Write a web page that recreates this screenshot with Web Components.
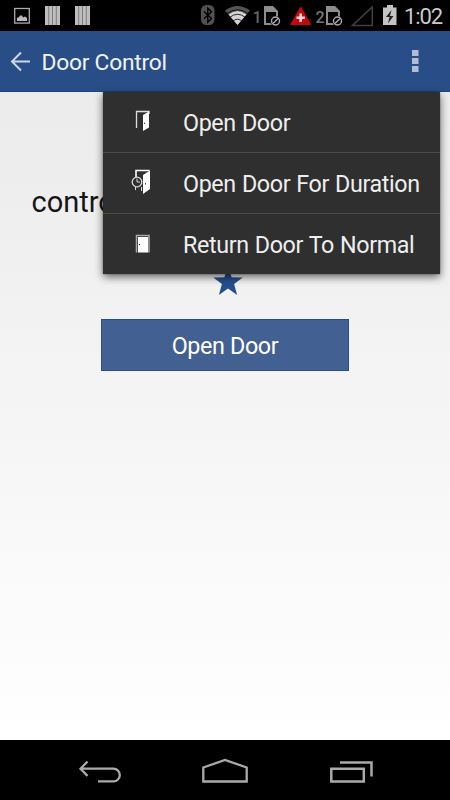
<!DOCTYPE html>
<html lang="en"><head><meta charset="utf-8"><title>Door Control</title>
<style>html,body{margin:0;height:100%;background:#000;overflow:hidden}body{font-family:Roboto,"Noto Sans",sans-serif}</style></head>
<body><door-app></door-app>
<script>
const define=(name,html)=>{const t=document.createElement('template');t.innerHTML=html;
customElements.define(name,class extends HTMLElement{constructor(){super();this.attachShadow({mode:'open'}).append(t.content.cloneNode(true));}});};

define('status-bar',`<style>:host{display:flex;height:31px;background:#000;color:#c4c4c4}svg{display:block;flex:none}text{font-family:Roboto,sans-serif}</style>
<svg width="38" height="31" viewBox="0 0 38 31"><rect x="14.700" y="8.500" width="14.600" height="14.600" fill="none" stroke="#aaa" stroke-width="1.300"/><path d="M17 21v-3l2-1 1-1.500h2l1 2 2-1 2 1.500v3z" fill="#bbb"/></svg>
<svg width="30" height="31" viewBox="38 0 30 31"><path d="M45 6h15v19H45z" fill="#bdbdbd"/><path d="M48.700 6v19M52.500 6v19M56.300 6v19" stroke="#777" stroke-width=".9"/></svg>
<svg width="130" height="31" viewBox="68 0 130 31"><path d="M75 6h15v19H75z" fill="#bdbdbd"/><path d="M78.700 6v19M82.500 6v19M86.300 6v19" stroke="#777" stroke-width=".9"/></svg>
<svg width="24" height="31" viewBox="198 0 24 31"><rect x="201" y="5" width="13.500" height="20" rx="5.500" fill="#505050"/><path d="M204 11.500l7.500 7-3.700 3.700V8.200l3.700 3.600-7.500 7" fill="none" stroke="#000" stroke-width="1.400"/></svg>
<svg width="30" height="31" viewBox="222 0 30 31"><path d="M225 10.500Q237.500 1.500 250 10.500L237.500 25z" fill="#555"/><path d="M228.500 14.500Q237.500 7.500 246.500 14.500L237.500 25z" fill="#d4d4d4"/><path d="M226.500 14Q237.500 5.500 248.500 14M229.500 17.500Q237.500 11 245.500 17.500M233 21Q237.500 17.500 242 21" fill="none" stroke="#000" stroke-width=".8"/></svg>
<svg width="36" height="31" viewBox="252 0 36 31"><text x="252.500" y="23" font-size="16" font-weight="500" fill="#666">1</text><path d="M264 6h9l5 5v14h-14z" fill="#8d8d8d"/><path d="M266 12h10v11h-10z" fill="#050505"/><circle cx="275.500" cy="21" r="5.300" fill="#050505"/><circle cx="275.500" cy="21" r="4" fill="none" stroke="#aaa" stroke-width="1.400"/><path d="M273 23.500l5-5" stroke="#aaa" stroke-width="1.400"/></svg>
<svg width="26" height="31" viewBox="288 0 26 31"><path d="M300.700 7l10 17.500h-20z" fill="#c6060b" stroke="#c6060b" stroke-width="1" stroke-linejoin="round"/><path d="M300.700 13.500v8.500M296.500 17.800h8.400" stroke="#f4dada" stroke-width="2.600"/></svg>
<svg width="34" height="31" viewBox="314 0 34 31"><text x="315.500" y="22.700" font-size="16" font-weight="500" fill="#777">2</text><path d="M326 6h9l5 5v14h-14z" fill="#8d8d8d"/><path d="M328 12h10v11h-10z" fill="#050505"/><circle cx="337.500" cy="21" r="5.300" fill="#050505"/><circle cx="337.500" cy="21" r="4" fill="none" stroke="#aaa" stroke-width="1.400"/><path d="M335 23.500l5-5" stroke="#aaa" stroke-width="1.400"/></svg>
<svg width="32" height="31" viewBox="348 0 32 31"><path d="M352.500 25.400h19.800V7z" fill="none" stroke="#404040" stroke-width="1.500"/></svg>
<svg width="22" height="31" viewBox="380 0 22 31"><path d="M383 7.500h4V5h6v2.500h3.500V25H383z" fill="#c4c4c4"/><path d="M391.500 10l-5.500 7h3.500l-1.500 6.500 5.500-7.500H390z" fill="#222"/></svg>
<svg width="48" height="31" viewBox="402 0 48 31"><text x="404" y="23.500" font-size="22" textLength="39" fill="#c9c9c9">1:02</text></svg>`);

define('app-bar',`<style>:host{display:flex;height:61px;box-sizing:border-box;background:#294e87;border-bottom:1px solid #174880;align-items:center;color:#f0f2f6;font-size:22.800px;letter-spacing:-.25px}svg{flex:none}.title{flex:1;padding:2px 0 0 8.500px}</style>
<svg width="33" height="60" viewBox="0 31 33 60"><path d="M30 61.500H12M21 52.500l-9 9 9 9" fill="none" stroke="#ccd5e5" stroke-width="2"/></svg>
<span class="title"><slot></slot></span>
<svg width="50" height="60" viewBox="400 31 50 60"><path d="M412 50h6.500v6H412zM412 58h6.500v6H412zM412 66h6.500v6H412z" fill="#b1bdd4"/></svg>`);

define('menu-item',`<style>:host{display:flex;align-items:center;height:60px;color:#eee;font-size:23.300px;letter-spacing:-.38px;word-spacing:.7px;white-space:nowrap;border-bottom:1px solid #4b4b4b}:host(:last-child){border:0}.icon{flex:none;width:80px;height:60px}.text{padding-top:2px}::slotted(svg){display:block}</style><span class="icon"><slot name="icon"></slot></span><span class="text"><slot></slot></span>`);
define('overflow-menu',`<style>:host{display:block;background:#2f2f2f;box-shadow:0 0 1px #000,0 3px 8px #0009;border-radius:1px}menu-item:first-child{}</style><slot></slot>`);
define('action-button',`<style>:host{display:flex;align-items:center;justify-content:center;box-sizing:border-box;width:248px;height:52px;padding-top:2px;background:#436092;border:1px solid #294e87;color:#fff;font-size:23.300px;letter-spacing:-.35px}</style><slot></slot>`);
define('door-panel',`<style>:host{display:flex;flex-direction:column;align-items:center;height:648px;background:linear-gradient(#ebebeb,#fff);overflow:hidden}.label{align-self:flex-start;margin:93px 0 0 31.500px;font-size:29px;line-height:34px;color:#151515}svg{display:block;margin:47px 0 0 6px}action-button{margin-top:22px}</style>
<div class="label">contro</div>
<svg width="32" height="31" viewBox="212 266 32 31"><path d="M228 267l3.700 10.300 11 .1-8.600 6.700 3 10.900-9.100-6.400-9.100 6.400 3-10.900-8.600-6.700 11-.1z" fill="#254f8c"/></svg>
<action-button>Open Door</action-button>`);
define('nav-bar',`<style>:host{display:flex;height:60px;background:#000;justify-content:space-between;padding:0 75px}svg{display:block}</style>
<svg width="50" height="60" viewBox="75 740 50 60"><path d="M81 768.700h32.500a6.300 6.300 0 0 1 0 12.600H98M87.500 761.500l-7 7.200 7 7.200" fill="none" stroke="#aaa" stroke-width="2.300"/></svg>
<svg width="50" height="60" viewBox="200 740 50 60"><path d="M203.300 781.500v-14l21.700-7.500 21.700 7.500v14z" fill="none" stroke="#aaa" stroke-width="2.300"/></svg>
<svg width="50" height="60" viewBox="325 740 50 60"><path d="M331.300 768.700h32.500v12.800h-32.500zM340 762.500h31.500v14" fill="none" stroke="#aaa" stroke-width="2.500"/></svg>`);
define('door-app',`<style>:host{display:block;position:relative;width:450px;height:800px;overflow:hidden}overflow-menu{position:absolute;left:103px;top:92px;width:337px}</style>
<status-bar></status-bar><app-bar>Door Control</app-bar><door-panel></door-panel><nav-bar></nav-bar>
<overflow-menu>
<menu-item><svg slot="icon" width="80" height="60" viewBox="103 92 80 60"><path d="M136.500 128v-16.500H149V114" fill="none" stroke="#ddd" stroke-width="1.300"/><path d="M143 115l6-3.500v16l-6 3.500z" fill="#fff"/><path d="M144.500 122.500v1.500" stroke="#555"/></svg>Open Door</menu-item>
<menu-item><svg slot="icon" width="80" height="60" viewBox="103 153 80 60"><path d="M136 177v-6.500h13.500" fill="none" stroke="#fff" stroke-width="1.600"/><path d="M143 175l7-4.500v18.500l-7 5z" fill="#fff"/><circle cx="137" cy="182" r="4.800" fill="#2f2f2f" stroke="#ddd" stroke-width="1.300"/><path d="M137 178.500v3.500h3M135.500 187v3M141.500 187v4" fill="none" stroke="#ddd"/><path d="M145.500 183v1.500" stroke="#555"/></svg>Open Door For Duration</menu-item>
<menu-item><svg slot="icon" width="80" height="60" viewBox="103 214 80 60"><path d="M136.500 252.500v-17h12.500v17" fill="none" stroke="#aaa" stroke-width="1.500"/><path d="M138 237h10v15.500h-10z" fill="#fff"/><circle cx="139.500" cy="244.500" r=".7" fill="#333"/></svg>Return Door To Normal</menu-item>
</overflow-menu>`);
</script></body></html>
